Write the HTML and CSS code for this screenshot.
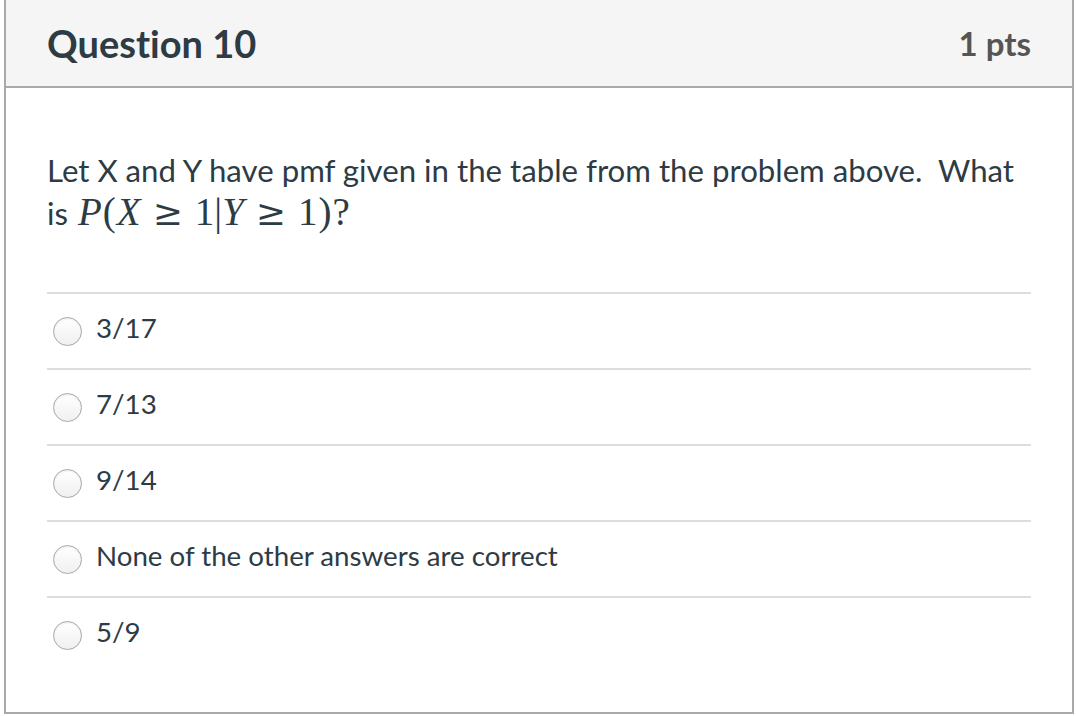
FILE: index.html
```html
<!DOCTYPE html>
<html>
<head>
<meta charset="utf-8">
<link rel="stylesheet" href="styles.css">
</head>
<body>
<div class="question">
  <div class="header">
    <h2 class="title">Question 10</h2>
    <span class="pts">1 pts</span>
  </div>
  <div class="content">
    <p class="text">Let X and Y have pmf given in the table from the problem above.&nbsp; What is <span class="math"><i>P</i><span class="paren">(</span><i>X</i><span class="rel">≥</span>1|<i>Y</i><span class="rel">≥</span>1<span class="paren">)</span>?</span></p>
    <div class="answers">
      <label class="answer"><span class="radio"></span><span class="label">3/17</span></label>
      <label class="answer"><span class="radio"></span><span class="label">7/13</span></label>
      <label class="answer"><span class="radio"></span><span class="label">9/14</span></label>
      <label class="answer"><span class="radio"></span><span class="label">None of the other answers are correct</span></label>
      <label class="answer"><span class="radio"></span><span class="label">5/9</span></label>
    </div>
  </div>
</div>
</body>
</html>
```

FILE: styles.css
```css
html, body {
  margin: 0;
  padding: 0;
  background: #ffffff;
}

body {
  font-family: Lato, "Open Sans", "Liberation Sans", sans-serif;
  color: #2d3b45;
  font-variant-ligatures: none;
}

.question {
  margin-left: 4px;
  width: 1070px;
  height: 714px;
  box-sizing: border-box;
  border: 2px solid #a9a9a9;
  border-top: none;
}

.header {
  height: 86px;
  background: #f5f5f5;
  border-bottom: 2px solid #a9a9a9;
  display: flex;
  align-items: center;
  justify-content: space-between;
  padding: 0 41px;
}

.title {
  margin: 0;
  font-size: 38px;
  font-weight: 700;
  color: #2d3b45;
}

.pts {
  font-size: 33px;
  font-weight: 700;
  color: #555555;
}

.content {
  padding: 0 41px;
}

.text {
  margin: 0;
  padding-top: 61px;
  font-size: 31.2px;
  line-height: 42px;
  height: 143px;
}

.math {
  font-family: "Liberation Serif", "DejaVu Serif", serif;
  font-size: 39px;
  color: #2d3b45;
  margin-left: 2px;
}

.math i {
  font-style: italic;
}

.paren {
  margin: 0 1px;
}

.rel {
  font-family: "DejaVu Serif", serif;
  font-size: 36px;
  margin: 0 12px 0 12px;
}

.answers {
  display: flex;
  flex-direction: column;
}

.answer {
  display: flex;
  align-items: center;
  height: 74px;
  border-top: 2px solid #dddddd;
}

.radio {
  width: 27px;
  height: 27px;
  border-radius: 50%;
  border: 1px solid #a8a8a8;
  background: linear-gradient(#ffffff, #f0f0f0);
  box-shadow: inset 0 1px 2px rgba(0,0,0,0.08);
  margin-left: 6px;
  margin-right: 14px;
  flex: none;
}

.label {
  font-size: 27.7px;
  color: #2d3b45;
  padding-bottom: 7px;
}
```
